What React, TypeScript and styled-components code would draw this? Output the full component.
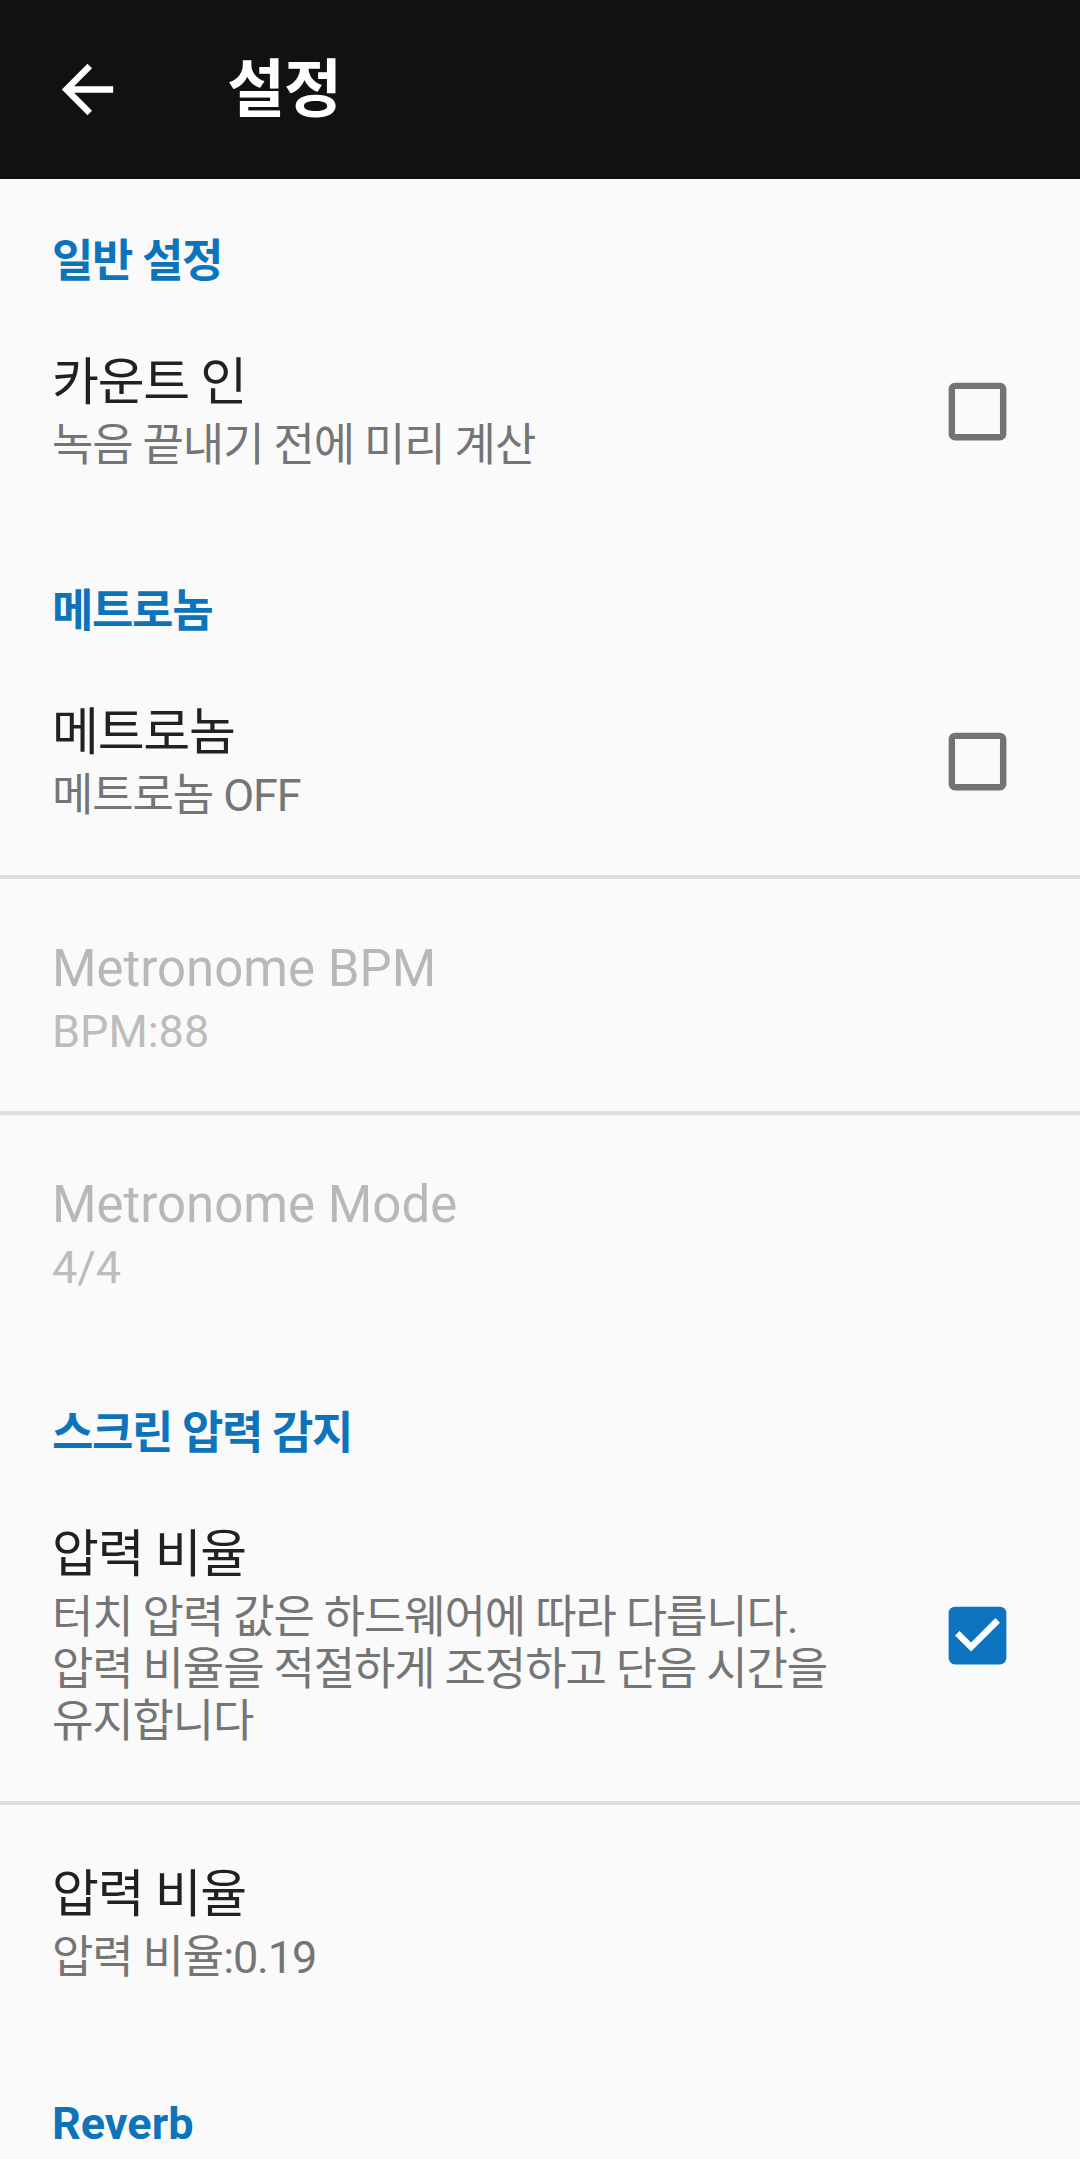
import React from 'react';
import styled, { createGlobalStyle } from 'styled-components';

const GlobalStyle = createGlobalStyle`
  html, body {
    margin: 0;
    padding: 0;
    background: #fafafa;
  }
  body {
    font-family: Roboto, "Noto Sans CJK KR", sans-serif;
    -webkit-font-smoothing: antialiased;
  }
`;

const Screen = styled.div`
  width: 1080px;
  min-height: 2159px;
  background: #fafafa;
  overflow: hidden;
`;

const AppBar = styled.header`
  height: 179px;
  background: #111111;
  display: flex;
  align-items: center;
`;

const BackButton = styled.button`
  margin-left: 49px;
  width: 77px;
  height: 77px;
  padding: 0;
  border: 0;
  background: transparent;
  display: flex;
  svg {
    width: 77px;
    height: 77px;
    fill: #ffffff;
  }
`;

const AppTitle = styled.h1`
  margin: 0 0 0 101px;
  color: #ffffff;
  font-size: 63px;
  font-weight: 700;
  line-height: 80px;
  letter-spacing: -1px;
`;

const Category = styled.div<{ $first?: boolean; $hangul?: boolean }>`
  padding: ${p => (p.$first ? '52px' : '56px')} 52px 0;
  line-height: 62px;
  font-size: 45px;
  font-weight: 700;
  color: #0d74bb;
  letter-spacing: ${p => (p.$hangul ? '-0.03em' : '0')};
`;

const Row = styled.div`
  display: flex;
  align-items: center;
  padding: 57px 64px 53px 52px;
`;

const TextCol = styled.div`
  flex: 1;
  min-width: 0;
  padding-right: 60px;
  word-break: keep-all;
`;

const ItemTitle = styled.div<{ $disabled?: boolean; $hangul?: boolean }>`
  font-size: 51px;
  line-height: 66px;
  color: ${p => (p.$disabled ? '#b8b8b8' : '#212121')};
  letter-spacing: ${p => (p.$hangul ? '-0.025em' : '0')};
`;

const Summary = styled.div<{ $disabled?: boolean; $hangul?: boolean }>`
  margin-top: 4px;
  font-size: 45px;
  line-height: 52px;
  color: ${p => (p.$disabled ? '#bcbcbc' : '#757575')};
  letter-spacing: ${p => (p.$hangul ? '-0.025em' : '0')};
`;

const Divider = styled.div`
  height: 4px;
  background: #dddddd;
`;

const CheckIcon = styled.svg<{ $checked?: boolean }>`
  flex: none;
  width: 77px;
  height: 77px;
  fill: ${p => (p.$checked ? '#0d74c0' : '#737373')};
`;

const Checkbox = ({ checked }: { checked: boolean }) => (
  <CheckIcon $checked={checked} viewBox="0 0 24 24">
    {checked ? (
      <>
        <rect x="3" y="3" width="18" height="18" rx="2" />
        <path d="M10 17l-5-5 1.41-1.41L10 14.17l7.59-7.59L19 8l-9 9z" fill="#ffffff" />
      </>
    ) : (
      <path d="M19 5v14H5V5h14m0-2H5c-1.1 0-2 .9-2 2v14c0 1.1.9 2 2 2h14c1.1 0 2-.9 2-2V5c0-1.1-.9-2-2-2z" />
    )}
  </CheckIcon>
);

type Pref = {
  title: string;
  summary: string;
  checkbox?: boolean;
  checked?: boolean;
  disabled?: boolean;
};

type Section = { title: string; items: Pref[] };

const sections: Section[] = [
  {
    title: '일반 설정',
    items: [{ title: '카운트 인', summary: '녹음 끝내기 전에 미리 계산', checkbox: true }],
  },
  {
    title: '메트로놈',
    items: [
      { title: '메트로놈', summary: '메트로놈 OFF', checkbox: true },
      { title: 'Metronome BPM', summary: 'BPM:88', disabled: true },
      { title: 'Metronome Mode', summary: '4/4', disabled: true },
    ],
  },
  {
    title: '스크린 압력 감지',
    items: [
      {
        title: '압력 비율',
        summary: '터치 압력 값은 하드웨어에 따라 다릅니다. 압력 비율을 적절하게 조정하고 단음 시간을 유지합니다',
        checkbox: true,
        checked: true,
      },
      { title: '압력 비율', summary: '압력 비율:0.19' },
    ],
  },
  { title: 'Reverb', items: [] },
];

const hasHangul = (s: string) => /[가-힣]/.test(s);

const App = () => {
  return (
    <Screen>
      <GlobalStyle />
      <AppBar>
        <BackButton aria-label="back">
          <svg viewBox="0 0 24 24">
            <path d="M20 11H7.83l5.59-5.59L12 4l-8 8 8 8 1.41-1.41L7.83 13H20v-2z" />
          </svg>
        </BackButton>
        <AppTitle>설정</AppTitle>
      </AppBar>

      {sections.map((section, si) => (
        <section key={section.title}>
          <Category $first={si === 0} $hangul={hasHangul(section.title)}>
            {section.title}
          </Category>
          {section.items.map((item, i) => (
            <React.Fragment key={i}>
              {i > 0 && <Divider />}
              <Row>
                <TextCol>
                  <ItemTitle $disabled={item.disabled} $hangul={hasHangul(item.title)}>
                    {item.title}
                  </ItemTitle>
                  <Summary $disabled={item.disabled} $hangul={hasHangul(item.summary)}>
                    {item.summary}
                  </Summary>
                </TextCol>
                {item.checkbox && <Checkbox checked={!!item.checked} />}
              </Row>
            </React.Fragment>
          ))}
        </section>
      ))}
    </Screen>
  );
};

export default App;
